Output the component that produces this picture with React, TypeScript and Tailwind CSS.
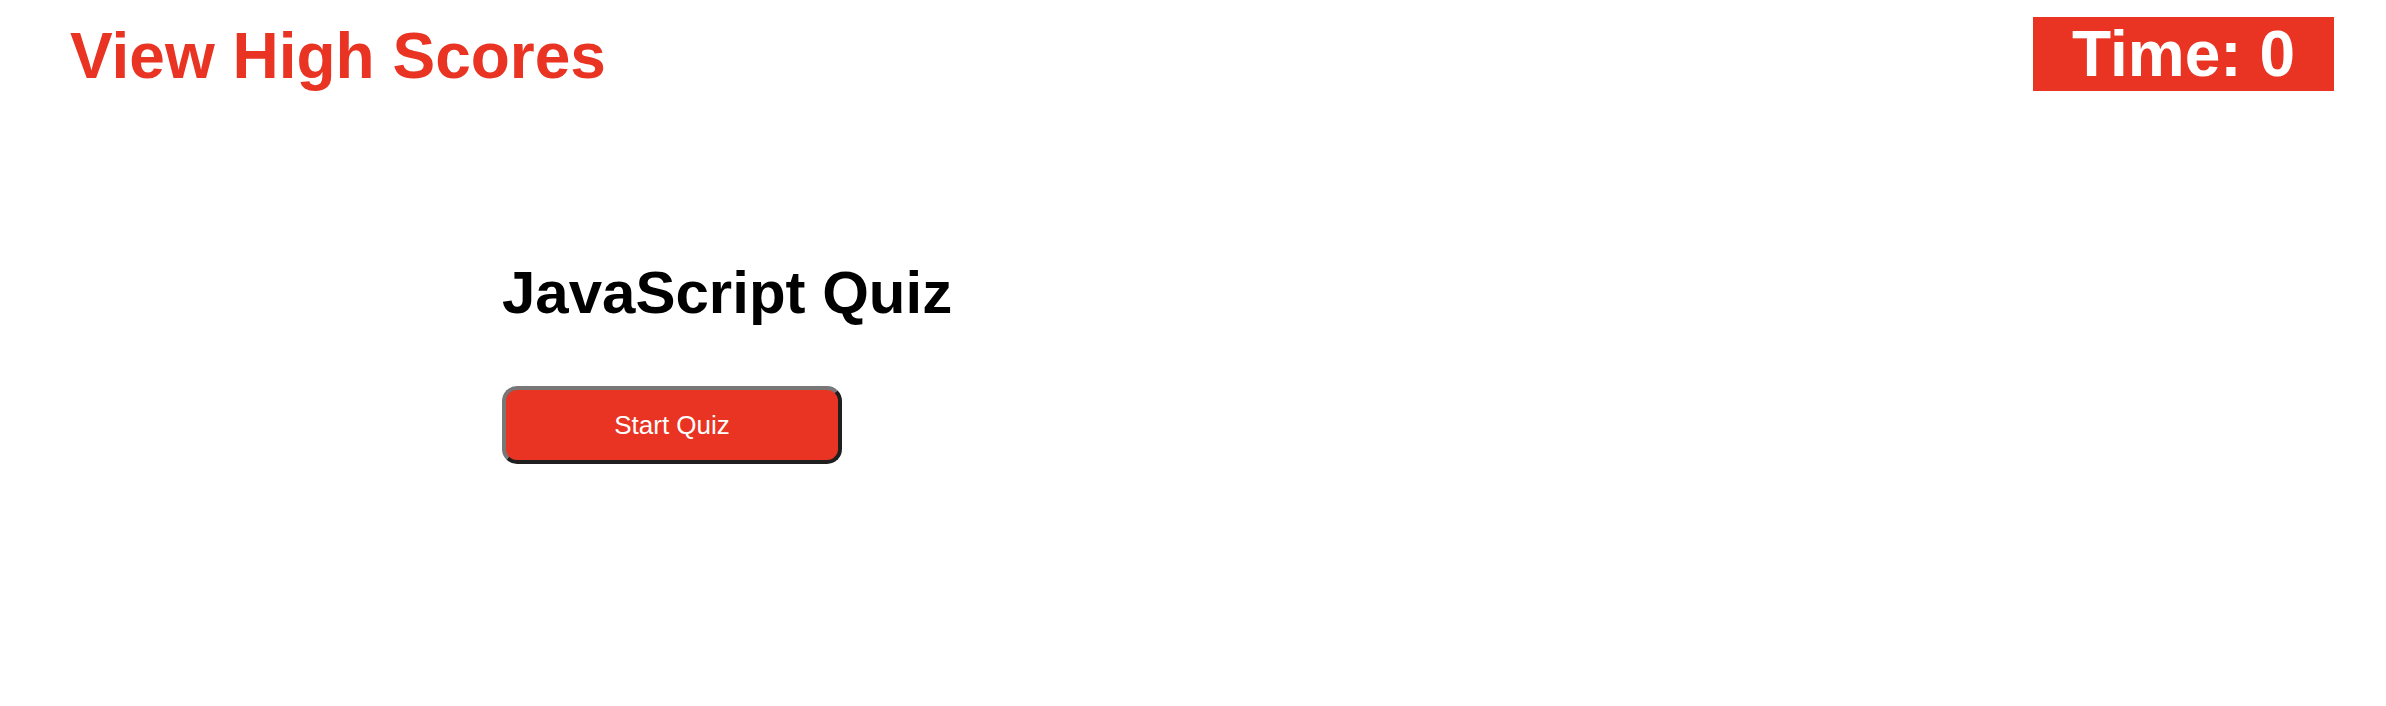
export default function App() {
  return (
    <div className="min-h-[706px] w-full bg-white font-['Liberation_Sans',Arial,sans-serif]">
      <header className="flex items-start justify-between pl-[70px] pr-[52px] pt-[17px]">
        <a
          href="#"
          className="mt-[2px] text-[64px] font-bold leading-[74px] text-[#e93424]"
        >
          View High Scores
        </a>
        <div className="bg-[#e93424] px-[39px] text-[64px] font-bold leading-[74px] text-white">
          Time: 0
        </div>
      </header>

      <main className="pl-[502px] pt-[165px]">
        <h1 className="text-[60px] font-bold leading-[69px] text-black">
          JavaScript Quiz
        </h1>
        <button
          type="button"
          className="mt-[59px] flex h-[78px] w-[340px] items-center justify-center rounded-[15px] border-4 border-b-[#1f1f1f] border-l-[#777777] border-r-[#1f1f1f] border-t-[#777777] bg-[#e93424] text-[26px] text-white"
        >
          Start Quiz
        </button>
      </main>
    </div>
  );
}
